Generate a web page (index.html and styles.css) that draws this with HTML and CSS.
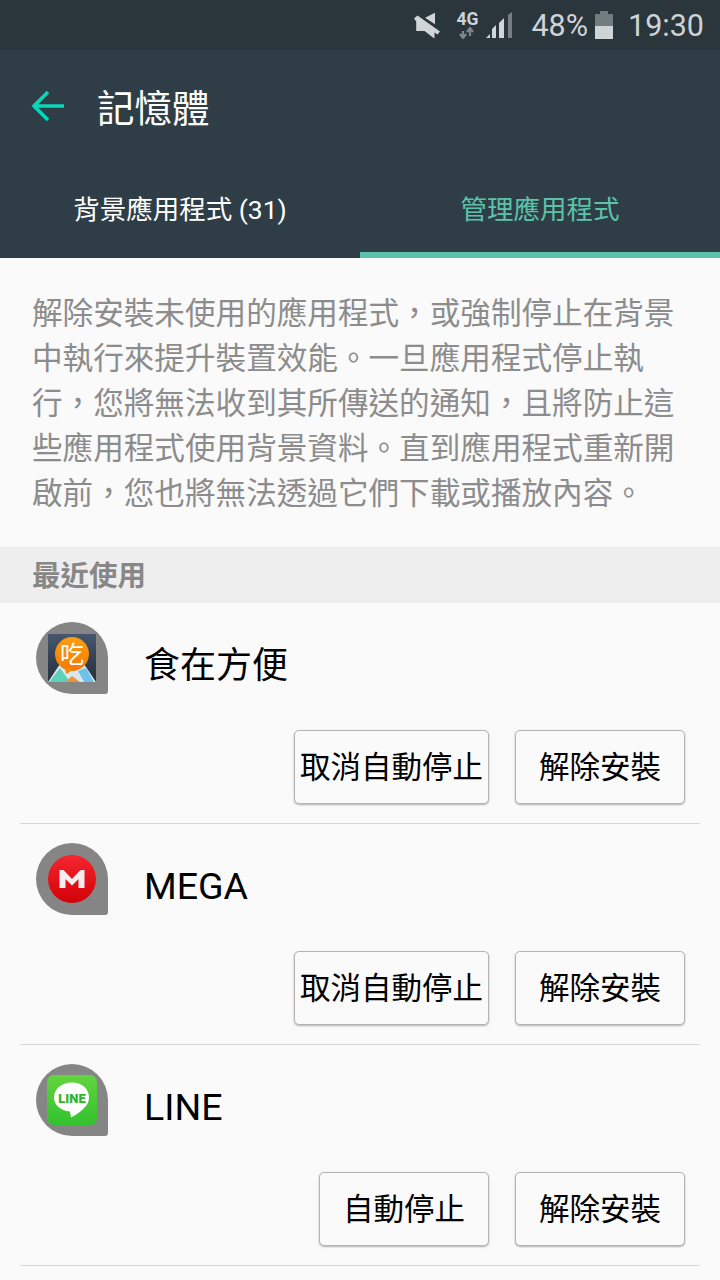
FILE: index.html
```html
<!DOCTYPE html>
<html lang="zh-Hant">
<head>
<meta charset="utf-8">
<title>記憶體</title>
<link rel="stylesheet" href="styles.css">
</head>
<body>
<div class="status">
  <svg class="i-mute" width="27" height="26" viewBox="414 12 27 26"><path d="M435 12.700v11.600l-10-6.600z" fill="#d0d5d7"/><path d="M414 18.500l3.500-3 22.500 16-2.500 3-3 -2v6.200l-10-7.700h-8.300v-9.500z" fill="#d0d5d7"/></svg>
  <div class="net"><span class="net-t">4G</span><svg width="16" height="12" viewBox="0 0 16 12"><path d="M4 11V4M1 7l3 4 3-4M11 1v8M8 5l3-4 3 4" stroke="#7d878c" stroke-width="2.200" fill="none"/></svg></div>
  <svg class="i-sig" width="27" height="28" viewBox="0 0 27 28"><path d="M0 27l4-4v4z M6 27v-9l4-4v13z" fill="#d0d5d7"/><path d="M13 27V12l5-5v20z" fill="#d0d5d7"/><path d="M22 27V4l4-3v26z" fill="#76807f"/></svg>
  <span class="pct">48%</span>
  <div class="batt"><div class="batt-cap"></div><div class="batt-body"></div></div>
  <span class="time">19:30</span>
</div>
<header class="appbar">
  <div class="titlebar">
    <svg class="back" width="34" height="34" viewBox="0 0 34 34"><path d="M33 17H4M17 3L3 17l14 14" stroke="#08d6b9" stroke-width="3.600" fill="none"/></svg>
    <h1 class="title">記憶體</h1>
  </div>
  <div class="tabs">
    <div class="tab">背景應用程式 (31)</div>
    <div class="tab tab-on">管理應用程式</div>
  </div>
</header>
<p class="desc">解除安裝未使用的應用程式，或強制停止在背景中執行來提升裝置效能。一旦應用程式停止執行，您將無法收到其所傳送的通知，且將防止這些應用程式使用背景資料。直到應用程式重新開啟前，您也將無法透過它們下載或播放內容。</p>
<div class="section">最近使用</div>
<div class="row">
  <div class="app">
    <div class="drop">
      <svg width="48" height="48" viewBox="0 0 48 48"><defs><linearGradient id="g1" x1="0" y1="0" x2="0" y2="1"><stop offset="0" stop-color="#46566e"/><stop offset="1" stop-color="#25303c"/></linearGradient><linearGradient id="g2" x1="0" y1="0" x2="0" y2="1"><stop offset="0" stop-color="#fb9d10"/><stop offset="1" stop-color="#f47a06"/></linearGradient></defs><rect width="48" height="48" fill="url(#g1)"/><path d="M0 48l12-18 12 4 12-4 12 18z" fill="#d9e8ee"/><path d="M1 48l11-14 10 14z" fill="#5fd0b8"/><path d="M17 48l7-6 8 6z" fill="#f0913c"/><path d="M30 37l8-3 8 14H36z" fill="#6cc2e8"/><circle cx="24" cy="20" r="17" fill="url(#g2)"/><path d="M17 33l1 7 7-4z" fill="#f58a08"/><text class="eat-t" x="24" y="28.500">吃</text></svg>
    </div>
    <span class="name name-cjk">食在方便</span>
  </div>
  <div class="actions"><button class="btn btn-long">取消自動停止</button><button class="btn btn-u">解除安裝</button></div>
</div>
<div class="row">
  <div class="app">
    <div class="drop">
      <svg width="48" height="48" viewBox="0 0 48 48"><defs><linearGradient id="g3" x1="0" y1="0" x2="0" y2="1"><stop offset="0" stop-color="#f5262f"/><stop offset="1" stop-color="#d20008"/></linearGradient></defs><circle cx="24" cy="24" r="24" fill="url(#g3)"/><path d="M11.500 33V15h4l8.500 9 8.500-9h4v18h-6V24l-6.500 6.500L17.500 24v9z" fill="#f6eeee"/></svg>
    </div>
    <span class="name name-lat">MEGA</span>
  </div>
  <div class="actions"><button class="btn btn-long">取消自動停止</button><button class="btn btn-u">解除安裝</button></div>
</div>
<div class="row">
  <div class="app">
    <div class="drop">
      <svg width="50" height="50" viewBox="0 0 50 50"><defs><linearGradient id="g4" x1="0" y1="0" x2="0" y2="1"><stop offset="0" stop-color="#62d43e"/><stop offset="1" stop-color="#33c22f"/></linearGradient></defs><rect width="50" height="50" rx="7" fill="url(#g4)"/><path d="M25 7.500c-11 0-18 7-18 15 0 7.500 6.500 13 16 14l1 6c5-2.500 10-6 14-10.500 2.500-2.700 4-5.700 4-9.500C42 14.500 36 7.500 25 7.500z" fill="#fff"/><text class="line-t" x="25" y="27.500">LINE</text></svg>
    </div>
    <span class="name name-lat">LINE</span>
  </div>
  <div class="actions"><button class="btn btn-stop">自動停止</button><button class="btn btn-u">解除安裝</button></div>
</div>
</body>
</html>
```
FILE: styles.css
```css
* { box-sizing: border-box; }
html, body { margin: 0; padding: 0; }
body {
  width: 720px;
  height: 1280px;
  overflow: hidden;
  background: #fafafa;
  font-family: Roboto, "Noto Sans CJK TC", sans-serif;
}
.status {
  height: 50px;
  background: #2a353c;
  display: flex;
  align-items: center;
  padding-right: 16px;
  justify-content: flex-end;
  color: #ced3d5;
}
.i-mute { margin-right: 14px; }
.net { width: 24px; display: flex; flex-direction: column; align-items: center; margin-right: 7px; }
.net-t { font-size: 17.500px; line-height: 15px; font-weight: 700; }
.i-sig { margin-right: 18px; }
.pct { font-size: 30.500px; margin-right: 7px; }
.batt { width: 18px; display: flex; flex-direction: column; align-items: center; margin-right: 15px; }
.batt-cap { width: 8px; height: 3px; background: #737d80; }
.batt-body { width: 18px; height: 25px; background: linear-gradient(#737d80 48%, #ced3d5 48%); }
.time { font-size: 30.500px; }
.appbar { height: 208px; background: #2f3e46; display: flex; flex-direction: column; }
.titlebar { height: 112px; display: flex; align-items: center; padding-left: 31px; }
.back { margin-right: 32px; flex: none; }
.title { margin: 0 0 2px; font-size: 37.500px; font-weight: 400; color: #fff; }
.tabs { flex: 1; display: flex; }
.tab {
  flex: 1;
  display: flex;
  align-items: center;
  justify-content: center;
  font-size: 26.500px;
  color: #fff;
  border-bottom: 6px solid transparent;
}
.tab-on { color: #5cc3aa; border-bottom-color: #5cc3aa; }
.desc {
  margin: 0;
  height: 289px;
  padding: 33px 30px 0 32px;
  font-size: 30.600px;
  line-height: 45px;
  color: #8c8c8c;
}
.section {
  height: 56px;
  background: #eeeeee;
  padding: 2px 0 0 32px;
  font-size: 28.500px;
  font-weight: 700;
  line-height: 56px;
  color: #878787;
}
.row {
  height: 221px;
  margin: 0 20px;
  border-bottom: 1px solid #d6d6d6;
  display: flex;
  flex-direction: column;
}
.app { display: flex; align-items: flex-start; padding: 19px 0 0 16px; height: 127px; }
.drop {
  width: 72px;
  height: 72px;
  flex: none;
  background: #858585;
  border-radius: 50% 50% 3px 50%;
  display: flex;
  align-items: center;
  justify-content: center;
}
.name { margin-left: 36px; font-size: 36px; line-height: 86px; height: 86px; color: #000; }
.name-cjk { line-height: 88px; }
.name-lat { font-size: 37.500px; }
.actions { display: flex; justify-content: flex-end; gap: 26px; padding-right: 15px; }
.btn {
  height: 74px;
  padding: 0 0 4px;
  background: #fafafa;
  border: 1px solid #b4b4b4;
  border-radius: 5px;
  box-shadow: 0 1px 2px rgba(0, 0, 0, .3);
  font-family: inherit;
  font-size: 30.500px;
  color: #000;
}
.btn-long { width: 195px; }
.btn-u { width: 170px; }
.btn-stop { width: 170px; }
.line-t { font-family: Roboto, sans-serif; font-size: 13px; font-weight: 900; fill: #2fb52a; text-anchor: middle; }
.eat-t { font-family: "Noto Sans CJK TC", sans-serif; font-size: 24px; fill: #fff; text-anchor: middle; }
```
